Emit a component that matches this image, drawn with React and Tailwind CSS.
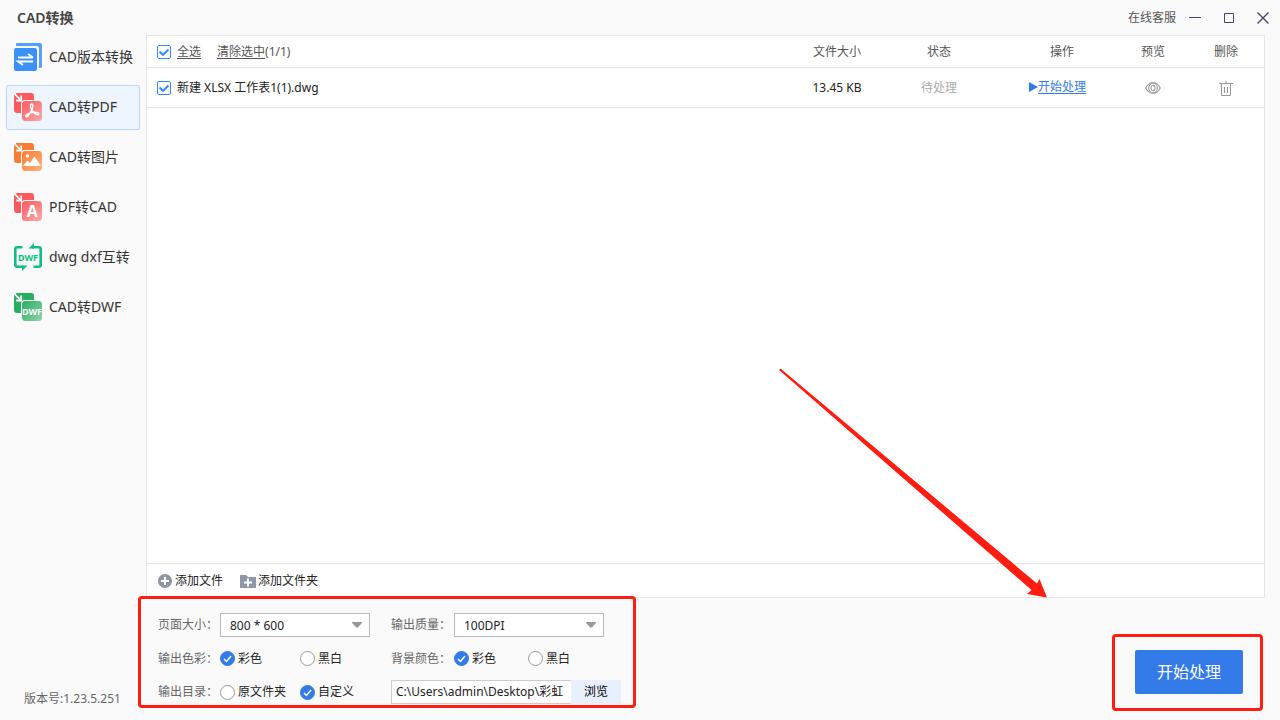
import { useState } from "react";

const navItems = [
  { id: "version", label: "CAD版本转换", icon: VersionIcon },
  { id: "cad-pdf", label: "CAD转PDF", icon: CadToPdfIcon },
  { id: "cad-image", label: "CAD转图片", icon: CadToImageIcon },
  { id: "pdf-cad", label: "PDF转CAD", icon: PdfToCadIcon },
  { id: "dwg-dxf", label: "dwg dxf互转", icon: DwgDxfIcon },
  { id: "cad-dwf", label: "CAD转DWF", icon: CadToDwfIcon },
];

const initialFiles = [
  { id: 1, name: "新建 XLSX 工作表1(1).dwg", size: "13.45 KB", status: "待处理", checked: true },
];

const svgFont = "'Noto Sans', sans-serif";

function VersionIcon() {
  return (
    <svg width="28" height="28" viewBox="0 0 28 28" aria-hidden="true">
      <path d="M3 0h23a2 2 0 0 1 2 2v21.500a1.500 1.500 0 0 1-1.500 1.500H25V5.500A2.500 2.500 0 0 0 22.500 3H2V1a1 1 0 0 1 1-1Z" fill="#56a0fb" />
      <rect y="5" width="23" height="23" rx="2" fill="#3a91fb" />
      <path d="M4 14.500h15M14 11l5 3.500M19 18.500H4l5 3.500" fill="none" stroke="#fff" strokeWidth="1.800" />
    </svg>
  );
}

// Two stacked tiles with an inward arrow, shared by the one-way converters
function StackedTiles({ id, back, from, to, children }) {
  return (
    <svg width="28" height="28" viewBox="0 0 28 28" aria-hidden="true">
      <defs>
        <linearGradient id={id} x1="0" y1="0" x2="1" y2="1">
          <stop offset="0" stopColor={from} />
          <stop offset="1" stopColor={to} />
        </linearGradient>
      </defs>
      <path d="M2.500 0H17a3 3 0 0 1 3 3v4H11a4 4 0 0 0-4 4v9H3a3 3 0 0 1-3-3V2.500Z" fill={back} />
      <path d="M.5.800 7 7.300" stroke="#fff" strokeWidth="1.800" />
      <path d="M7.200 2.500v5H2.200" fill="none" stroke="#fff" strokeWidth="1.800" />
      <rect x="8" y="8" width="20" height="20" rx="3.500" fill={`url(#${id})`} />
      {children}
    </svg>
  );
}

function CadToPdfIcon() {
  return (
    <StackedTiles id="tile-pdf" back="#fd5a5e" from="#fd5a5e" to="#fda9a9">
      <path
        d="M17.200 11.200c1.600-.6 2 1.500 1.200 4-.9 2.900-3.500 7.700-5.400 8.500-1.300.5-1.800-.8-.5-1.800 2.800-2.200 8.300-3.200 11.200-2.200 1.700.6 1.500 2 .1 2-2.800-.1-6.300-4.100-7-7.200-.3-1.600-.3-3 .4-3.300Z"
        fill="none"
        stroke="#fff"
        strokeWidth="1.500"
      />
    </StackedTiles>
  );
}

function CadToImageIcon() {
  return (
    <StackedTiles id="tile-image" back="#fd7b32" from="#fd7b32" to="#fdb27e">
      <circle cx="13.500" cy="13" r="1.800" fill="#fff" />
      <path d="M9.500 23v-.8l4-4.700 2.500 2.500 4.500-6.500 6 8.700v.8Z" fill="#fff" />
    </StackedTiles>
  );
}

function PdfToCadIcon() {
  return (
    <StackedTiles id="tile-cad" back="#fd5a5e" from="#fd5a5e" to="#fda9a9">
      <text x="18.200" y="24" textAnchor="middle" fontFamily={svgFont} fontSize="16" fontWeight="700" fill="#fff">A</text>
    </StackedTiles>
  );
}

function DwgDxfIcon() {
  return (
    <svg width="28" height="28" viewBox="0 0 28 28" aria-hidden="true">
      <path d="M8.500 4.300H3a1.700 1.700 0 0 0-1.700 1.700v16A1.700 1.700 0 0 0 3 23.700h6M18 4.300h7A1.700 1.700 0 0 1 26.700 6v16a1.700 1.700 0 0 1-1.700 1.700h-5.500" fill="none" stroke="#0dbf82" strokeWidth="2.600" />
      <path d="M14.500 5.500 20 0v5.500ZM13.500 22.500 8 28v-5.500Z" fill="#0dbf82" />
      <text x="14" y="17.500" textAnchor="middle" fontFamily={svgFont} fontSize="9" fontWeight="700" fill="#0dbf82">DWF</text>
    </svg>
  );
}

function CadToDwfIcon() {
  return (
    <StackedTiles id="tile-dwf" back="#28ae60" from="#28ae60" to="#8fd3aa">
      <text x="18" y="21.500" textAnchor="middle" fontFamily={svgFont} fontSize="9" fontWeight="700" fill="#fff">DWF</text>
    </StackedTiles>
  );
}

function EyeIcon() {
  return (
    <svg width="16" height="12" viewBox="0 0 16 12" fill="none" stroke="#a6a6a6" strokeWidth="1.200" aria-hidden="true">
      <path d="M.7 6C2.500 2.500 5 .7 8 .7S13.500 2.500 15.300 6C13.500 9.500 11 11.300 8 11.300S2.500 9.500.7 6Z" />
      <ellipse cx="8" cy="6" rx="4.300" ry="4.800" />
      <ellipse cx="8" cy="6" rx="2" ry="2.700" />
    </svg>
  );
}

function TrashIcon() {
  return (
    <svg width="14" height="15" viewBox="0 0 14 15" fill="none" stroke="#999" aria-hidden="true">
      <path d="M0 2.500h14M7 0v2M2.500 3v11.500h9V3M5.500 6v6M8.500 6v6" />
    </svg>
  );
}

function CheckBox({ label, ...props }) {
  return (
    <span className="relative inline-flex h-[14px] w-[14px] shrink-0">
      <input
        type="checkbox"
        aria-label={label}
        className="peer h-[14px] w-[14px] appearance-none rounded-[2px] border border-[#338bff] bg-white"
        {...props}
      />
      <svg className="pointer-events-none absolute inset-0 hidden peer-checked:block" width="14" height="14" viewBox="0 0 14 14">
        <path d="m2.500 6.500 3.500 3.300 5.500-5.300" fill="none" stroke="#338bff" strokeWidth="2" />
      </svg>
    </span>
  );
}

function Radio({ label, ...props }) {
  return (
    <label className="flex items-center gap-[3px] whitespace-nowrap text-[#222]">
      <span className="relative inline-flex h-[15px] w-[15px] shrink-0">
        <input
          type="radio"
          className="peer h-[15px] w-[15px] appearance-none rounded-full border border-[#999] bg-white checked:border-[#347bea] checked:bg-[#347bea]"
          {...props}
        />
        <svg className="pointer-events-none absolute inset-0 hidden peer-checked:block" width="15" height="15" viewBox="0 0 15 15">
          <path d="m4 8 2.500 2.500L11 5" fill="none" stroke="#fff" strokeWidth="1.500" />
        </svg>
      </span>
      {label}
    </label>
  );
}

function RadioGroup({ name, label, options, value, onChange, columns }) {
  return (
    <div role="radiogroup" aria-label={label} className={`grid items-center ${columns}`}>
      {options.map((option) => (
        <Radio key={option} name={name} label={option} checked={value === option} onChange={() => onChange(option)} />
      ))}
    </div>
  );
}

function SelectBox({ id, options }) {
  return (
    <div className="relative w-[150px]">
      <select id={id} className="h-6 w-full appearance-none border border-[#bbb] bg-white pl-[9px] pt-px text-xs text-[#222] outline-none">
        {options.map((option) => <option key={option}>{option}</option>)}
      </select>
      <svg className="pointer-events-none absolute right-[7px] top-[9px]" width="12" height="6" viewBox="0 0 12 6">
        <path d="M1.500 0h9c.6 0 .8.500.4 1L7 5.300c-.6.600-1.400.600-2 0L1.100 1c-.4-.5-.2-1 .4-1Z" fill="#999" />
      </svg>
    </div>
  );
}

function TitleBar() {
  return (
    <header className="flex h-[35px] shrink-0 items-center">
      <h1 className="pl-[17px] text-sm font-semibold text-[#444]">CAD转换</h1>
      <a href="#support" className="ml-auto pr-0.5 text-[#555]">在线客服</a>
      <button type="button" aria-label="最小化" className="flex h-full w-[34px] items-center justify-center">
        <svg width="12" height="12" viewBox="0 0 12 12"><path d="M0 5.500h12" stroke="#414a66" /></svg>
      </button>
      <button type="button" aria-label="最大化" className="flex h-full w-[34px] items-center justify-center">
        <svg width="10" height="10" viewBox="0 0 10 10"><path d="M.5.5h9v9h-9Z" fill="none" stroke="#414a66" /></svg>
      </button>
      <button type="button" aria-label="关闭" className="flex h-full w-[34px] items-center justify-center">
        <svg width="12" height="12" viewBox="0 0 12 12"><path d="m.5.5 11 11M11.500.5l-11 11" stroke="#414a66" strokeWidth="1.400" /></svg>
      </button>
    </header>
  );
}

function Sidebar({ active, onSelect }) {
  return (
    <aside className="flex w-[146px] shrink-0 flex-col px-1.5">
      <nav className="flex flex-col gap-[5px]">
        {navItems.map(({ id, label, icon: Icon }) => (
          <button
            key={id}
            type="button"
            onClick={() => onSelect(id)}
            className={`flex h-[45px] items-center gap-[7px] rounded-[2px] border pb-px pl-[7px] text-sm whitespace-nowrap text-[#333] ${
              active === id ? "border-[#b9d7fb] bg-[#eef5ff]" : "border-transparent"
            }`}
          >
            <Icon />
            {label}
          </button>
        ))}
      </nav>
      <p className="mt-auto pb-[11px] pl-[18px] leading-5 text-[#666]">版本号:1.23.5.251</p>
    </aside>
  );
}

function FileTable({ files, onToggle, onToggleAll, onClear, onRemove }) {
  const checkedCount = files.filter((file) => file.checked).length;

  return (
    <table className="w-full table-fixed border-separate border-spacing-0">
      <colgroup>
        <col />
        <col className="w-[70px]" />
        <col className="w-[134px]" />
        <col className="w-[112px]" />
        <col className="w-[70px]" />
        <col className="w-[76px]" />
      </colgroup>
      <thead>
        <tr className="h-8 text-[#555] *:border-b *:border-[#e6e6e6] *:p-0 *:font-normal">
          <th>
            <div className="flex items-center pl-[10px]">
              <CheckBox label="全选" checked={files.length > 0 && checkedCount === files.length} onChange={onToggleAll} />
              <button type="button" onClick={onToggleAll} className="ml-1.5 underline underline-offset-2">全选</button>
              <button type="button" onClick={onClear} className="ml-4 underline underline-offset-2">清除选中</button>
              <span>({checkedCount}/{files.length})</span>
            </div>
          </th>
          <th>文件大小</th>
          <th>状态</th>
          <th>操作</th>
          <th>预览</th>
          <th>删除</th>
        </tr>
      </thead>
      <tbody>
        {files.map((file) => (
          <tr key={file.id} className="h-10 text-center text-[#222] *:border-b *:border-[#e6e6e6] *:p-0">
            <td>
              <div className="flex items-center gap-1.5 pl-[10px]">
                <CheckBox label={file.name} checked={file.checked} onChange={() => onToggle(file.id)} />
                {file.name}
              </div>
            </td>
            <td>{file.size}</td>
            <td className="text-[#aaa]">{file.status}</td>
            <td>
              <div className="flex items-center justify-center pb-0.5 pr-[9px]">
                <svg width="9" height="12" viewBox="0 0 9 12"><path d="M0 1v10l9-5Z" fill="#2f7bea" /></svg>
                <button type="button" className="text-[#2f7bea] underline underline-offset-2">开始处理</button>
              </div>
            </td>
            <td>
              <button type="button" aria-label="预览" className="align-middle"><EyeIcon /></button>
            </td>
            <td>
              <button type="button" aria-label="删除" onClick={() => onRemove(file.id)} className="align-middle"><TrashIcon /></button>
            </td>
          </tr>
        ))}
      </tbody>
    </table>
  );
}

function AddToolbar() {
  return (
    <div className="flex h-[34px] items-center gap-[17px] border-t border-[#e6e6e6] pl-[11px] pt-px text-[#222]">
      <button type="button" className="flex items-center gap-[3px]">
        <svg width="14" height="14" viewBox="0 0 14 14" aria-hidden="true">
          <circle cx="7" cy="7" r="7" fill="#8f96a8" />
          <path d="M3 7h8M7 3v8" stroke="#fff" strokeWidth="2" />
        </svg>
        添加文件
      </button>
      <button type="button" className="flex items-center gap-0.5">
        <svg width="16" height="13" viewBox="0 0 16 13" aria-hidden="true">
          <path d="M0 0h6l2 2h8v11H0Z" fill="#8f96a8" />
          <path d="M4 7.500h8M8 3.500v8" stroke="#fff" strokeWidth="2" />
        </svg>
        添加文件夹
      </button>
    </div>
  );
}

function OutputOptions() {
  const [color, setColor] = useState("彩色");
  const [background, setBackground] = useState("彩色");
  const [target, setTarget] = useState("自定义");
  const [path, setPath] = useState("C:\\Users\\admin\\Desktop\\彩虹");

  return (
    <form className="relative w-[490px] pb-1 pl-3 pt-[15px] text-[#666]">
      <div className="grid grid-cols-[62px_171px_63px_1fr] grid-rows-[24px_23px_24px] items-center gap-y-[10px]">
        <label htmlFor="page-size">页面大小：</label>
        <SelectBox id="page-size" options={["800 * 600", "1024 * 768", "1920 * 1080"]} />
        <label htmlFor="quality">输出质量：</label>
        <SelectBox id="quality" options={["100DPI", "200DPI", "300DPI"]} />

        <span>输出色彩：</span>
        <RadioGroup name="color" label="输出色彩" options={["彩色", "黑白"]} value={color} onChange={setColor} columns="grid-cols-[80px_1fr]" />
        <span>背景颜色：</span>
        <RadioGroup name="background" label="背景颜色" options={["彩色", "黑白"]} value={background} onChange={setBackground} columns="grid-cols-[74px_1fr]" />

        <span>输出目录：</span>
        <RadioGroup name="target" label="输出目录" options={["原文件夹", "自定义"]} value={target} onChange={setTarget} columns="grid-cols-[80px_1fr]" />
        <div className="col-span-2 flex h-6">
          <input
            type="text"
            aria-label="输出目录"
            value={path}
            onChange={(event) => setPath(event.target.value)}
            className="w-[180px] border border-r-0 border-[#ccc] bg-white pl-1 text-[#222] outline-none"
          />
          <button type="button" className="w-[50px] bg-[#e8f0fe] text-black">浏览</button>
        </div>
      </div>
      <div className="pointer-events-none absolute -left-2 -top-0.5 bottom-0 right-0 rounded-[4px] border-3 border-[#ff1d12]" />
    </form>
  );
}

export default function App() {
  const [active, setActive] = useState("cad-pdf");
  const [files, setFiles] = useState(initialFiles);

  const toggleFile = (id) => {
    setFiles((list) => list.map((file) => (file.id === id ? { ...file, checked: !file.checked } : file)));
  };

  const toggleAll = () => {
    const next = !files.every((file) => file.checked);
    setFiles((list) => list.map((file) => ({ ...file, checked: next })));
  };

  return (
    <div className="flex min-h-screen flex-col bg-[#fafafa] font-['Noto_Sans','Noto_Sans_CJK_SC',sans-serif] text-xs">
      <TitleBar />
      <div className="flex flex-1">
        <Sidebar active={active} onSelect={setActive} />
        <main className="flex min-w-0 flex-1 flex-col">
          <section className="relative mr-[15px] flex flex-1 flex-col border border-[#e6e6e6] bg-white">
            <div className="flex-1">
              <FileTable
                files={files}
                onToggle={toggleFile}
                onToggleAll={toggleAll}
                onClear={() => setFiles((list) => list.filter((file) => !file.checked))}
                onRemove={(id) => setFiles((list) => list.filter((file) => file.id !== id))}
              />
            </div>
            <AddToolbar />
            <svg className="pointer-events-none absolute -bottom-px right-[216px] z-10" width="269" height="230" viewBox="0 0 269 230" aria-hidden="true">
              <path d="M0 2 1.500.500 258 215.500 260.500 211 268 229.500 248 226 252.500 222Z" fill="#ff1d12" />
            </svg>
          </section>

          <footer className="flex h-[122px] items-start justify-between">
            <OutputOptions />
            <div className="relative mr-[37px] mt-[52px]">
              <button type="button" className="h-11 w-[108px] rounded-[2px] bg-[#347bea] text-base text-white">开始处理</button>
              <div className="pointer-events-none absolute -bottom-[17px] -left-[23px] -right-5 -top-4 rounded-[4px] border-3 border-[#ff1d12]" />
            </div>
          </footer>
        </main>
      </div>
    </div>
  );
}
